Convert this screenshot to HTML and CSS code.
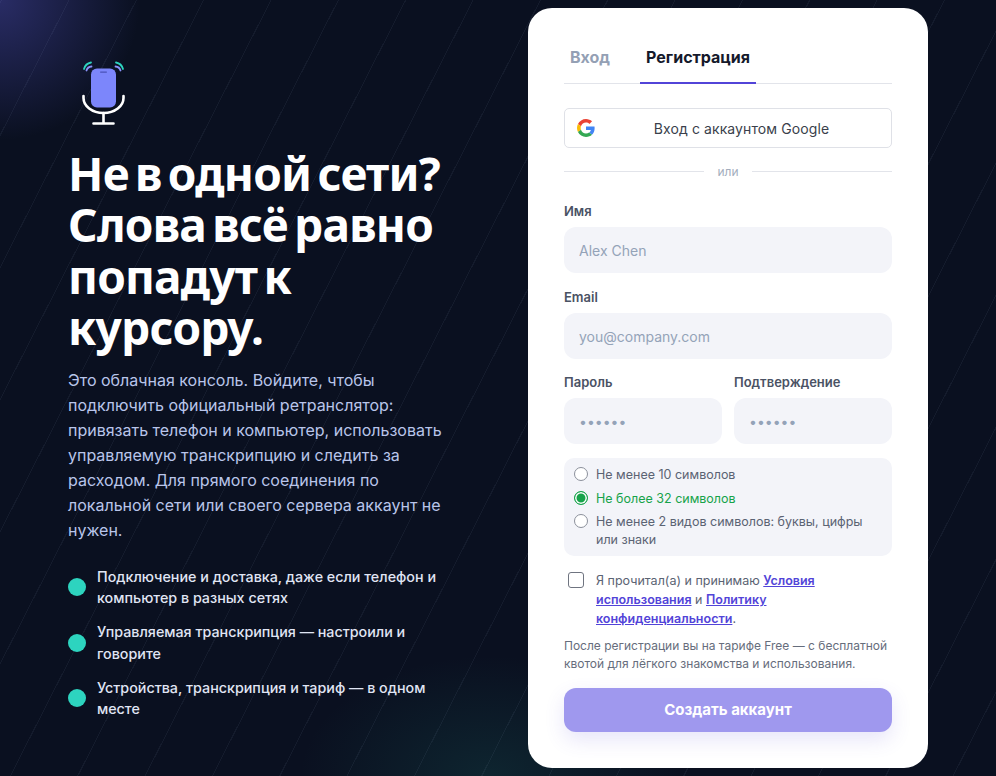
FILE: index.html
```html
<!DOCTYPE html>
<html lang="ru">
<head>
<meta charset="utf-8">
<title>Регистрация</title>
<link rel="stylesheet" href="styles.css">
</head>
<body>
<main class="page">
  <section class="hero">
    <svg class="logo" width="48" height="66" viewBox="0 0 48 66" fill="none">
      <rect x="11" y="7.5" width="25" height="39" rx="6" fill="#7c86fb"/>
      <rect x="20" y="10.500" width="7" height="1.200" rx=".6" fill="#4a52b8"/>
      <path d="M6.500 9.500 A5.500 5.500 0 0 1 11.500 5.500" stroke="#8a92fb" stroke-width="1.800" stroke-linecap="round"/>
      <path d="M4 8 A9 9 0 0 1 11 1.500" stroke="#2dd4bf" stroke-width="1.800" stroke-linecap="round"/>
      <path d="M40.500 9.500 A5.500 5.500 0 0 0 35.500 5.500" stroke="#8a92fb" stroke-width="1.800" stroke-linecap="round"/>
      <path d="M43 8 A9 9 0 0 0 36 1.500" stroke="#2dd4bf" stroke-width="1.800" stroke-linecap="round"/>
      <path d="M3.500 35 V37 C3.500 45 12 52 23.500 52 C35 52 43.500 45 43.500 37 V35" stroke="#fff" stroke-width="2.600" stroke-linecap="round"/>
      <path d="M23.500 52 V62.500 M13.500 62.500 H33.500" stroke="#fff" stroke-width="2.600" stroke-linecap="round"/>
    </svg>
    <h1 class="title">Не в одной сети? Слова всё равно попадут к курсору.</h1>
    <p class="lead">Это облачная консоль. Войдите, чтобы подключить официальный ретранслятор: привязать телефон и компьютер, использовать управляемую транскрипцию и следить за расходом. Для прямого соединения по локальной сети или своего сервера аккаунт не нужен.</p>
    <ul class="points">
      <li class="point"><span class="dot"></span><span>Подключение и доставка, даже если телефон и компьютер в разных сетях</span></li>
      <li class="point"><span class="dot"></span><span>Управляемая транскрипция — настроили и говорите</span></li>
      <li class="point"><span class="dot"></span><span>Устройства, транскрипция и тариф — в одном месте</span></li>
    </ul>
  </section>

  <section class="card">
    <nav class="tabs">
      <a class="tab">Вход</a>
      <a class="tab tab-active">Регистрация</a>
    </nav>
    <button class="google" type="button">
      <svg width="18" height="18" viewBox="0 0 48 48">
        <path fill="#EA4335" d="M24 9.500c3.540 0 6.710 1.220 9.210 3.600l6.850-6.850C35.900 2.380 30.470 0 24 0 14.620 0 6.510 5.380 2.560 13.220l7.980 6.190C12.430 13.720 17.740 9.500 24 9.500z"/>
        <path fill="#4285F4" d="M46.980 24.550c0-1.570-.15-3.090-.38-4.550H24v9.020h12.940c-.58 2.960-2.260 5.480-4.780 7.180l7.730 6c4.510-4.180 7.090-10.360 7.090-17.650z"/>
        <path fill="#FBBC05" d="M10.530 28.590c-.48-1.450-.76-2.990-.76-4.590s.27-3.140.76-4.590l-7.980-6.190C.92 16.460 0 20.120 0 24c0 3.880.92 7.540 2.560 10.780l7.970-6.190z"/>
        <path fill="#34A853" d="M24 48c6.480 0 11.930-2.130 15.890-5.810l-7.730-6c-2.150 1.450-4.920 2.300-8.160 2.300-6.260 0-11.570-4.220-13.470-9.910l-7.980 6.190C6.510 42.620 14.620 48 24 48z"/>
      </svg>
      <span class="google-text">Вход с аккаунтом Google</span>
    </button>
    <div class="divider"><span>или</span></div>
    <form class="form">
      <label class="field"><span class="label">Имя</span><input class="input" type="text" placeholder="Alex Chen"></label>
      <label class="field field-tight"><span class="label">Email</span><input class="input" type="email" placeholder="you@company.com"></label>
      <div class="pair">
        <label class="field"><span class="label">Пароль</span><input class="input" type="password" placeholder="••••••"></label>
        <label class="field"><span class="label">Подтверждение</span><input class="input" type="password" placeholder="••••••"></label>
      </div>
      <ul class="rules">
        <li class="rule"><span class="radio"></span><span>Не менее 10 символов</span></li>
        <li class="rule rule-ok"><span class="radio radio-on"></span><span>Не более 32 символов</span></li>
        <li class="rule"><span class="radio"></span><span>Не менее 2 видов символов: буквы, цифры или знаки</span></li>
      </ul>
      <label class="agree">
        <input class="check" type="checkbox">
        <span>Я прочитал(а) и принимаю <a class="link">Условия использования</a> и <a class="link">Политику конфиденциальности</a>.</span>
      </label>
      <p class="note">После регистрации вы на тарифе Free — с бесплатной квотой для лёгкого знакомства и использования.</p>
      <button class="submit" type="button">Создать аккаунт</button>
    </form>
  </section>
</main>
</body>
</html>
```
FILE: styles.css
```css
* { box-sizing: border-box; }
html, body { margin: 0; height: 100%; }
body {
  font-family: Inter, "Noto Sans", sans-serif;
  overflow: hidden;
  background-color: #0a1020;
}
.page {
  height: 776px;
  padding: 8px 68px;
  display: flex;
  justify-content: space-between;
  align-items: center;
  background-color: #0a1020;
  background-image:
    repeating-linear-gradient(117deg, transparent 2px 61px, rgba(190,215,255,.055) 61px 62px),
    radial-gradient(circle 140px at 0 0, rgba(72,72,170,.5), transparent),
    radial-gradient(ellipse 190px 120px at 490px 776px, rgba(30,120,110,.2), transparent);
}
.hero { width: 378px; padding-top: 1px; color: #fff; }
.logo { display: block; margin: 3px 0 21px 12px; }
.title {
  margin: 0 0 14px;
  font-family: "Noto Sans", sans-serif;
  font-size: 46px;
  font-weight: 700;
  line-height: 51.500px;
  letter-spacing: -.75px;
  word-spacing: -5px;
  color: #fff;
}
.lead {
  margin: 0 0 23px;
  font-size: 16px;
  line-height: 25px;
  color: #b9c5ea;
}
.points { list-style: none; margin: 0; padding: 0; display: flex; flex-direction: column; gap: 12.500px; }
.point {
  display: flex;
  align-items: center;
  gap: 11px;
  font-size: 14.300px;
  font-weight: 500;
  line-height: 21.500px;
  color: #e0e5f4;
}
.dot { flex: none; width: 18px; height: 18px; border-radius: 50%; background: #2dd4bf; }
.card {
  flex: none;
  width: 400px;
  height: 760px;
  padding: 36px;
  border-radius: 24px;
  background: #fff;
}
.tabs { display: flex; gap: 24px; height: 40px; border-bottom: 1px solid #e2e4ea; margin-bottom: 24px; }
.tab {
  padding: 0 6px;
  height: 40px;
  font-size: 16px;
  font-weight: 700;
  line-height: 26px;
  color: #94a0b4;
}
.tab-active { color: #15192b; border-bottom: 2px solid #5244d8; }
.google {
  width: 100%;
  height: 40px;
  padding: 0 3px 0 12px;
  display: flex;
  align-items: center;
  background: #fff;
  border: 1px solid #dfe1e7;
  border-radius: 5px;
  font-family: inherit;
  font-size: 14px;
  color: #3a3f4b;
}
.google-text { flex: 1; text-align: center; letter-spacing: .1px; }
.divider {
  display: flex;
  align-items: center;
  gap: 13px;
  height: 18px;
  margin: 14px 0 23px;
  font-size: 12px;
  color: #a3adbd;
}
.divider::before, .divider::after { content: ""; flex: 1; height: 1px; background: #e2e4ea; }
.form { display: flex; flex-direction: column; }
.field { display: flex; flex-direction: column; flex: 1; min-width: 0; margin-bottom: 16px; }
.field-tight { margin-bottom: 15px; }
.label { font-size: 13px; font-weight: 600; line-height: 16px; color: #4a5264; margin-bottom: 8px; }
.input {
  width: 100%;
  height: 46px;
  padding: 0 15px;
  border: 0;
  border-radius: 12px;
  background: #f3f4f9;
  font-family: inherit;
  font-size: 14px;
  color: #15192b;
}
.input::placeholder { color: #94a3b8; opacity: 1; }
.pair { display: flex; gap: 12px; }
.pair .field { margin-bottom: 14px; }
.rules {
  list-style: none;
  margin: 0 0 15px;
  padding: 8px 10px 6.800px;
  border-radius: 10px;
  background: #f3f4f9;
  font-size: 12.500px;
  line-height: 18px;
  color: #5b6373;
}
.rule { display: flex; gap: 8px; padding: 0; margin-bottom: 5.600px; }
.rule:last-child { margin-bottom: 0; }
.rule-ok { color: #16a34a; }
.radio {
  flex: none;
  width: 14px;
  height: 14px;
  margin-top: 1px;
  border-radius: 50%;
  border: 1px solid #8b909b;
  background: #fff;
}
.radio-on { border: 1.500px solid #16a34a; box-shadow: inset 0 0 0 1.500px #fff; background: #16a34a; }
.agree {
  display: flex;
  gap: 12px;
  padding-left: 4px;
  margin-bottom: 9px;
  font-size: 12.500px;
  line-height: 19px;
  color: #5b6373;
}
.check {
  flex: none;
  appearance: none;
  width: 16px;
  height: 16px;
  margin: 1px 0 0;
  border: 1px solid #6f7480;
  border-radius: 3px;
  background: #fff;
}
.link { color: #5244d8; font-weight: 600; text-decoration: underline; }
.note { margin: 0 0 15px; font-size: 12px; line-height: 18px; color: #666d7c; }
.submit {
  width: 100%;
  height: 44px;
  border: 0;
  border-radius: 12px;
  background: #9f98ee;
  color: #fff;
  font-family: inherit;
  font-size: 15px;
  font-weight: 700;
  box-shadow: 0 8px 20px rgba(82,68,216,.14);
}
```
